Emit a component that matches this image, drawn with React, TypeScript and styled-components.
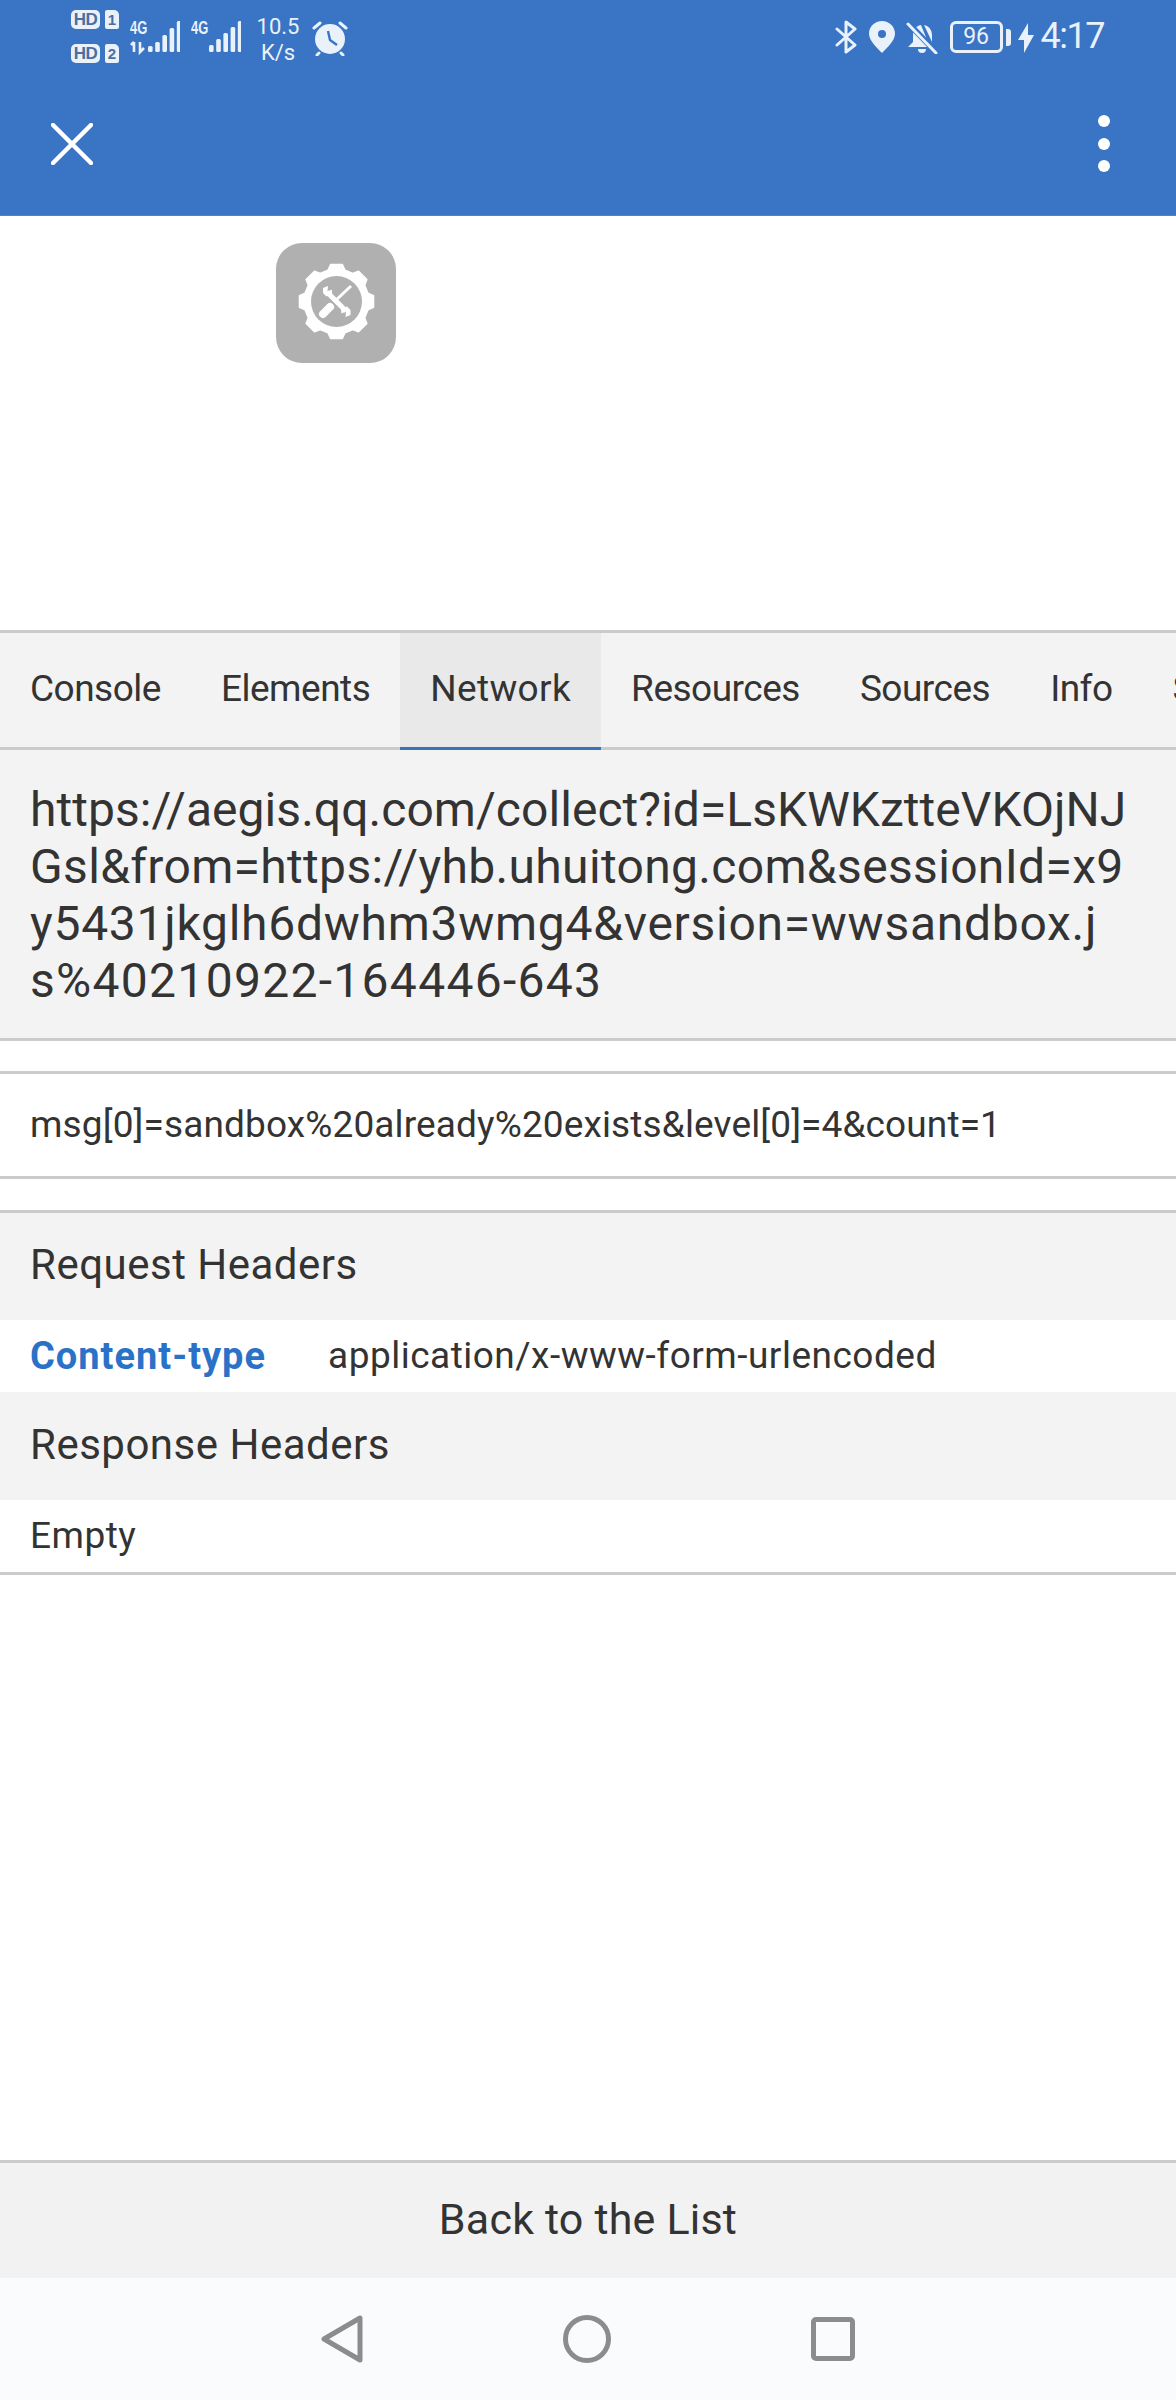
import React from "react";
import styled, { createGlobalStyle } from "styled-components";

const Global = createGlobalStyle`
  html, body { margin: 0; padding: 0; background: #fff; }
  * { box-sizing: border-box; }
  body { font-family: Roboto, "Noto Sans", sans-serif; color: #333; }
`;

const Page = styled.div`
  width: 1176px;
  height: 2400px;
  display: flex;
  flex-direction: column;
  overflow: hidden;
  background: #fff;
`;

const Header = styled.header`
  height: 216px;
  background: #3a74c5;
  border-bottom: 1px solid #5680b6;
  display: flex;
  flex-direction: column;
`;

const StatusBar = styled.div`
  height: 72px;
  padding: 8px 72px 0 71px;
  display: flex;
  justify-content: space-between;
  align-items: flex-start;
  color: #e9f1fb;
`;

const StatusGroup = styled.div`
  display: flex;
  align-items: flex-start;
`;

const SimColumn = styled.div`
  display: flex;
  flex-direction: column;
  gap: 15px;
  margin-top: 2px;
`;

const SimRow = styled.div`
  display: flex;
  align-items: center;
  gap: 5px;
`;

const HdBadge = styled.span`
  width: 29px;
  height: 19px;
  border-radius: 5px;
  background: #e9f1fb;
  color: #4a6f9f;
  font: 700 17px/19px "Liberation Sans", sans-serif;
  letter-spacing: -0.5px;
  text-align: center;
`;

const SimCard = styled.span`
  width: 14px;
  height: 19px;
  border-radius: 2px 5px 2px 2px;
  background: #e9f1fb;
  color: #4a6f9f;
  font: 700 15px/19px "Liberation Sans", sans-serif;
  text-align: center;
`;

const Signal = styled.div`
  position: relative;
  width: 50px;
  height: 46px;
  margin: 10px 0 0 11px;
`;

const NetLabel = styled.span`
  position: absolute;
  left: 0;
  top: 1px;
  font: 700 18px/18px "Liberation Sans", sans-serif;
  transform: scaleX(0.72);
  transform-origin: left top;
`;

const Speed = styled.div`
  width: 48px;
  margin: 6px 0 0 13px;
  font: 400 22px/26px Roboto, sans-serif;
  text-align: center;
`;

const Time = styled.span`
  font: 400 36px/38px Roboto, sans-serif;
  letter-spacing: -1.5px;
  margin: 9px 0 0 7px;
`;

const Battery = styled.div`
  width: 53px;
  height: 32px;
  margin: 13px 0 0 12px;
  border: 3px solid #e9f1fb;
  border-radius: 6px;
  font: 400 23px/26px Roboto, sans-serif;
  text-align: center;
`;

const BatteryNub = styled.span`
  width: 5px;
  height: 17px;
  margin: 21px 0 0 3px;
  border-radius: 0 3px 3px 0;
  background: #e9f1fb;
`;

const Toolbar = styled.div`
  flex: 1;
  padding: 0 66px 0 51px;
  display: flex;
  justify-content: space-between;
  align-items: center;
`;

const IconZone = styled.section`
  height: 414px;
  padding: 27px 0 0 276px;
`;

const ToolIcon = styled.div`
  width: 120px;
  height: 120px;
  border-radius: 26px;
  background: #b0b0b0;
`;

const Tabs = styled.nav`
  height: 120px;
  display: flex;
  overflow: hidden;
  flex: none;
  background: #f3f3f3;
  border-top: 3px solid #cbcbcb;
`;

const Tab = styled.div<{ $active?: boolean }>`
  flex: none;
  height: 117px;
  padding: 0 30px;
  font-size: 37px;
  line-height: 111px;
  letter-spacing: ${(p) => (p.$active ? 0.35 : -0.5)}px;
  background: ${(p) => (p.$active ? "#e9e9e9" : "transparent")};
  border-bottom: 3px solid ${(p) => (p.$active ? "#3a72b8" : "#cbcbcb")};
`;

const UrlBlock = styled.section`
  height: 291px;
  flex: none;
  padding: 31px 30px 0;
  background: #f3f3f3;
  border-bottom: 3px solid #cbcbcb;
  font-size: 48px;
  line-height: 57px;
  white-space: nowrap;
`;

const UrlLine = styled.div<{ $ls: number }>`
  letter-spacing: ${(p) => p.$ls}px;
`;

const Gap = styled.div<{ $ruled?: boolean }>`
  height: ${(p) => (p.$ruled ? 33 : 31)}px;
  flex: none;
  border-bottom: ${(p) => (p.$ruled ? "3px solid #cbcbcb" : "0")};
`;

const BodyBlock = styled.section`
  height: 105px;
  flex: none;
  padding: 0 30px;
  border-bottom: 3px solid #cbcbcb;
  font-size: 37px;
  line-height: 102px;
  letter-spacing: 0.13px;
`;

const GroupTitle = styled.h2`
  margin: 0;
  height: 108px;
  flex: none;
  padding: 0 30px;
  background: #f3f3f3;
  font-weight: 400;
  font-size: 42px;
  line-height: 106px;
  letter-spacing: 0.5px;
`;

const HeaderTop = styled(GroupTitle)`
  height: 110px;
  border-top: 3px solid #cbcbcb;
  line-height: 104px;
`;

const Row = styled.div`
  height: 72px;
  flex: none;
  padding: 0 30px;
  display: flex;
  font-size: 37px;
  line-height: 72px;
  letter-spacing: 0.5px;
`;

const RowKey = styled.span`
  width: 298px;
  color: #2a72c8;
  font-size: 38px;
  font-weight: 700;
  letter-spacing: 1px;
`;

const EmptyRow = styled(Row)`
  height: 75px;
  border-bottom: 3px solid #cbcbcb;
`;

const Spacer = styled.div`
  flex: 1;
`;

const BackButton = styled.div`
  height: 118px;
  flex: none;
  background: #f2f2f2;
  border-top: 3px solid #cbcbcb;
  text-align: center;
  font-size: 43px;
  line-height: 112px;
  letter-spacing: 0.2px;
`;

const NavBar = styled.div`
  height: 122px;
  flex: none;
  background: #fafbfd;
  display: flex;
  justify-content: center;
  align-items: center;
  gap: 200px;
`;

const gearOutline = () => {
  const cx = 60.5;
  const cy = 58.5;
  const pt = (deg: number, r: number) => {
    const t = (deg * Math.PI) / 180;
    return `${(cx + r * Math.cos(t)).toFixed(2)} ${(cy + r * Math.sin(t)).toFixed(2)}`;
  };
  const parts: string[] = [];
  for (let i = 0; i < 8; i++) {
    const a = i * 45;
    parts.push(pt(a - 15, 32.5), pt(a - 9, 37.5), pt(a + 9, 37.5), pt(a + 15, 32.5));
  }
  return `M${parts.join(" L")} Z`;
};

const Gear = () => (
  <svg width="120" height="120" viewBox="0 0 120 120">
    <path d={gearOutline()} fill="#fff" stroke="#fff" strokeWidth="1.5" strokeLinejoin="round" />
    <circle cx="60.5" cy="58.5" r="25.5" fill="#b0b0b0" />
    <path d="M58 59 L75 43" stroke="#fff" strokeWidth="3" />
    <path d="M47 71 L54 64" stroke="#fff" strokeWidth="8" strokeLinecap="round" />
    <path d="M51 49 L70 68" stroke="#fff" strokeWidth="5" />
    <path d="M52 43 L47 45 L47 50 L50.5 53.5 L56 51 L56 46.5 L51.5 48.5 Z" fill="#fff" />
    <path d="M69.5 74 L74.5 72 L74.5 67 L71 63.5 L65 66 L65.5 70.5 L70 68.5 Z" fill="#fff" />
  </svg>
);

const Bars = ({ x, heights }: { x: number; heights: number[] }) => (
  <>
    {heights.map((h, i) => (
      <rect key={i} x={x + i * 7.2} y={34 - h} width="4.6" height={h} rx="1.5" fill="#e9f1fb" />
    ))}
  </>
);

export default function App() {
  return (
    <Page>
      <Global />
      <Header>
        <StatusBar>
          <StatusGroup>
            <SimColumn>
              <SimRow><HdBadge>HD</HdBadge><SimCard>1</SimCard></SimRow>
              <SimRow><HdBadge>HD</HdBadge><SimCard>2</SimCard></SimRow>
            </SimColumn>
            <Signal>
              <NetLabel>4G</NetLabel>
              <svg width="50" height="46" viewBox="0 0 50 46">
                <path d="M4 34 V24 M1 27 L4 24 M10 24 V34 L14 30" stroke="#e9f1fb" strokeWidth="2.6" fill="none" />
                <Bars x={18} heights={[6, 10, 17, 24, 31]} />
              </svg>
            </Signal>
            <Signal>
              <NetLabel>4G</NetLabel>
              <svg width="50" height="46" viewBox="0 0 50 46">
                <Bars x={18} heights={[7, 13, 19, 25, 31]} />
              </svg>
            </Signal>
            <Speed>10.5<br />K/s</Speed>
            <svg width="36" height="36" viewBox="0 0 36 36" style={{ margin: "12px 0 0 10px" }}>
              <circle cx="18" cy="19" r="15" fill="#e9f1fb" />
              <path d="M2 8 L8 3 M34 8 L28 3 M7 33 L5 35 M29 33 L31 35" stroke="#e9f1fb" strokeWidth="3" strokeLinecap="round" />
              <path d="M16 11 L18 20 L25 25" stroke="#3a74c5" strokeWidth="2.4" fill="none" />
            </svg>
          </StatusGroup>
          <StatusGroup>
            <svg width="24" height="34" viewBox="0 0 24 34" style={{ marginTop: 12 }}>
              <path d="M2 9 L20 25 L11 32 V2 L20 9 L2 25" stroke="#e9f1fb" strokeWidth="3" fill="none" strokeLinejoin="round" strokeLinecap="round" />
            </svg>
            <svg width="26" height="32" viewBox="0 0 26 32" style={{ margin: "13px 0 0 10px" }}>
              <path fillRule="evenodd" d="M13 0 C5.8 0 0 5.6 0 12.6 C0 20 8 27 13 32 C18 27 26 20 26 12.6 C26 5.6 20.2 0 13 0 Z M13 9 a4 4 0 1 1 0 8 a4 4 0 1 1 0 -8 Z" fill="#e9f1fb" />
            </svg>
            <svg width="32" height="32" viewBox="0 0 32 32" style={{ margin: "14px 0 0 11px" }}>
              <path d="M15 3 C9 4 7 9 7 13 L7 20 L2 25 H24 Z M26 20 V13 C26 8 23 4 18 3 Z" fill="#e9f1fb" />
              <path d="M12 27 H20 A4 4 0 0 1 12 27 Z" fill="#e9f1fb" />
              <path d="M3 2 L30 30" stroke="#3a74c5" strokeWidth="6" />
              <path d="M2 2 L30 31" stroke="#e9f1fb" strokeWidth="3" strokeLinecap="round" />
            </svg>
            <Battery>96</Battery>
            <BatteryNub />
            <svg width="16" height="30" viewBox="0 0 16 30" style={{ margin: "15px 0 0 7px" }}>
              <path d="M10 0 L0 17 H6 L6 30 L16 12 H10 Z" fill="#e9f1fb" />
            </svg>
            <Time>4:17</Time>
          </StatusGroup>
        </StatusBar>
        <Toolbar>
          <svg width="42" height="42" viewBox="0 0 42 42">
            <path d="M2 2 L40 40 M40 2 L2 40" stroke="#fff" strokeWidth="4.5" strokeLinecap="round" />
          </svg>
          <svg width="12" height="58" viewBox="0 0 12 58">
            <circle cx="6" cy="6" r="6" fill="#fff" />
            <circle cx="6" cy="29" r="6" fill="#fff" />
            <circle cx="6" cy="51" r="6" fill="#fff" />
          </svg>
        </Toolbar>
      </Header>

      <IconZone>
        <ToolIcon><Gear /></ToolIcon>
      </IconZone>

      <Tabs>
        <Tab>Console</Tab>
        <Tab>Elements</Tab>
        <Tab $active>Network</Tab>
        <Tab>Resources</Tab>
        <Tab>Sources</Tab>
        <Tab>Info</Tab>
        <Tab>Storage</Tab>
      </Tabs>

      <UrlBlock>
        <UrlLine $ls={0.05}>https://aegis.qq.com/collect?id=LsKWKztteVKOjNJ</UrlLine>
        <UrlLine $ls={0.33}>Gsl&amp;from=https://yhb.uhuitong.com&amp;sessionId=x9</UrlLine>
        <UrlLine $ls={0.72}>y5431jkglh6dwhm3wmg4&amp;version=wwsandbox.j</UrlLine>
        <UrlLine $ls={1.3}>s%40210922-164446-643</UrlLine>
      </UrlBlock>

      <Gap $ruled />
      <BodyBlock>msg[0]=sandbox%20already%20exists&amp;level[0]=4&amp;count=1</BodyBlock>
      <Gap />

      <HeaderTop>Request Headers</HeaderTop>
      <Row>
        <RowKey>Content-type</RowKey>
        <span>application/x-www-form-urlencoded</span>
      </Row>
      <GroupTitle>Response Headers</GroupTitle>
      <EmptyRow>Empty</EmptyRow>

      <Spacer />

      <BackButton>Back to the List</BackButton>
      <NavBar>
        <svg width="42" height="48" viewBox="0 0 42 48">
          <path d="M39 3 V45 L3 24 Z" fill="none" stroke="#8c8c8c" strokeWidth="5" strokeLinejoin="round" />
        </svg>
        <svg width="48" height="48" viewBox="0 0 48 48">
          <circle cx="24" cy="24" r="21.5" fill="none" stroke="#8c8c8c" strokeWidth="5" />
        </svg>
        <svg width="44" height="44" viewBox="0 0 44 44">
          <rect x="2.5" y="2.5" width="39" height="39" rx="2.5" fill="none" stroke="#8c8c8c" strokeWidth="5" />
        </svg>
      </NavBar>
    </Page>
  );
}
